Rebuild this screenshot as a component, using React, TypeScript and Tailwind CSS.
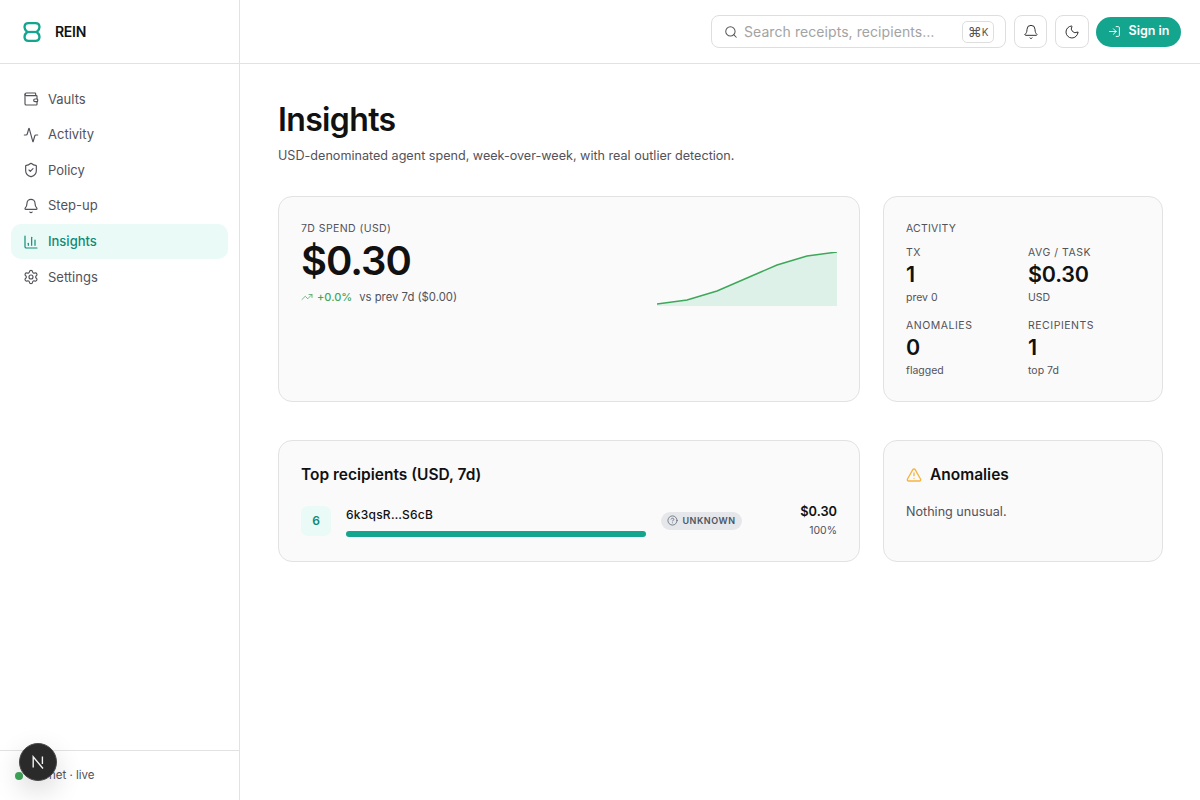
import { Activity, Bell, ChartColumn, CircleHelp, LogIn, Moon, Search, Settings, ShieldCheck, TrendingUp, TriangleAlert, Wallet } from "lucide-react";

const links = [
  { label: "Vaults", icon: Wallet },
  { label: "Activity", icon: Activity },
  { label: "Policy", icon: ShieldCheck },
  { label: "Step-up", icon: Bell },
  { label: "Insights", icon: ChartColumn, active: true },
  { label: "Settings", icon: Settings },
];

const stats = [
  { label: "TX", value: "1", note: "prev 0" },
  { label: "AVG / TASK", value: "$0.30", note: "USD" },
  { label: "ANOMALIES", value: "0", note: "flagged" },
  { label: "RECIPIENTS", value: "1", note: "top 7d" },
];

function Logo() {
  return (
    <svg width="18" height="20" viewBox="0 0 18 20" fill="none" stroke="#14a58f" strokeWidth="2.3">
      <path d="M5.4 1.2h7.2c4.6 0 5.2 5.6 1.2 8.8c4 3.2 3.4 8.8-1.2 8.8H5.4c-4.6 0-5.2-5.6-1.2-8.8c-4-3.2-3.4-8.8 1.2-8.8Z" />
      <path d="M4.2 10h9.6" />
    </svg>
  );
}

function Sidebar() {
  return (
    <aside className="relative flex h-[800px] w-[240px] shrink-0 flex-col border-r border-[#e2e2e2]">
      <div className="flex h-[64px] items-center gap-[14px] border-b border-[#e2e2e2] pl-[23px]">
        <Logo />
        <span className="text-[14px] font-semibold tracking-[-0.02em] text-[#111]">REIN</span>
      </div>
      <nav className="flex flex-1 flex-col gap-px px-[11px] pt-[18px]">
        {links.map((link) => (
          <a
            key={link.label}
            className={`flex h-[34.6px] items-center gap-[9px] rounded-[10px] pl-[12px] text-[13px] ${
              link.active ? "bg-[#eafaf6] font-medium text-[#0f8a78]" : "text-[#52525b]"
            }`}
          >
            <link.icon className="h-4 w-4" strokeWidth={1.75} />
            {link.label}
          </a>
        ))}
      </nav>
      <div className="flex h-[50px] items-center gap-[6px] border-t border-[#e2e2e2] pl-[15px] text-[11.5px] text-[#52525b]">
        <span className="h-2 w-2 rounded-full bg-[#3fa75a]" />
        devnet · live
      </div>
      {/* dev indicator */}
      <div className="absolute left-[19px] top-[743px] flex h-[38px] w-[38px] items-center justify-center rounded-full border border-[#4a4a4a] bg-[#2a2a2a] shadow-[0_10px_28px_rgba(0,0,0,0.16)]">
        <svg width="14" height="14" viewBox="0 0 14 14" fill="none" stroke="#f2f2f2" strokeWidth="1.4">
          <path d="M2.2 12.5V1.8L12 13.5" />
          <path d="M11.4 1.5v7.5" />
        </svg>
      </div>
    </aside>
  );
}

function Header() {
  return (
    <header className="flex h-[64px] items-center justify-end gap-2 border-b border-[#e2e2e2] pr-[19px]">
      <div className="flex h-[33px] w-[295px] items-center rounded-[8px] border border-[#dedede] pl-[12px] pr-[11px]">
        <Search className="h-[14px] w-[14px] text-[#555]" strokeWidth={1.75} />
        <span className="ml-[6px] flex-1 text-[14px] tracking-[0.005em] text-[#a3a3a3]">Search receipts, recipients…</span>
        <span className="flex h-[22px] w-[32px] items-center justify-center rounded-[5px] border border-[#dedede] text-[#555]">
          <span className="text-[14px] leading-none">⌘</span>
          <span className="text-[10px] leading-none">K</span>
        </span>
      </div>
      <button className="flex h-[33px] w-[33px] items-center justify-center rounded-[8px] border border-[#dedede] text-[#333]">
        <Bell className="h-4 w-4" strokeWidth={1.5} />
      </button>
      <button className="-mr-px flex h-[33px] w-[34px] items-center justify-center rounded-[8px] border border-[#dedede] text-[#333]">
        <Moon className="h-4 w-4" strokeWidth={1.5} />
      </button>
      <button className="flex h-[30px] w-[85px] items-center justify-center gap-[8px] rounded-full bg-[#14a58f] pb-px text-[12.5px] font-semibold text-white">
        <LogIn className="h-[13px] w-[13px]" strokeWidth={1.75} />
        Sign in
      </button>
    </header>
  );
}

function Sparkline() {
  return (
    <svg width="180" height="56" viewBox="0 0 180 56" className="mt-[30px]">
      <path d="M0 52 L30 48 L60 39 L90 26 L120 13 L150 4 L180 0 L180 54 L0 54 Z" fill="#def1e9" />
      <path d="M0 52 L30 48 L60 39 L90 26 L120 13 L150 4 L180 0" fill="none" stroke="#3fa75a" strokeWidth="1.5" />
    </svg>
  );
}

export default function App() {
  return (
    <div className="flex h-[800px] w-[1200px] overflow-hidden bg-white font-['Inter',sans-serif] text-[#111]">
      <Sidebar />
      <div className="flex-1">
        <Header />
        <main className="pl-[38px] pr-[37px] pt-[36px]">
          <h1 className="text-[32px] font-semibold leading-[40px] tracking-[-0.02em]">Insights</h1>
          <p className="mt-[7px] text-[12.6px] leading-[18px] text-[#52525b]">USD-denominated agent spend, week-over-week, with real outlier detection.</p>

          <div className="mt-[31px] grid grid-cols-[582px_280px] gap-x-[23px] gap-y-[38px]">
            <section className="flex h-[206px] justify-between rounded-[14px] border border-[#e2e2e2] bg-[#fafafa] px-[22px] pt-[25px]">
              <div>
                <div className="text-[10.5px] leading-[14px] tracking-[0.04em] text-[#52525b]">7D SPEND (USD)</div>
                <div className="mt-px text-[40px] font-semibold leading-[48px] tracking-[-0.025em]">$0.30</div>
                <div className="mt-[4px] flex items-center text-[11px] leading-[16px] text-[#52525b]">
                  <TrendingUp className="h-3 w-3 text-[#3fa75a]" strokeWidth={1.5} />
                  <span className="ml-[4px] font-medium text-[#3fa75a]">+0.0%</span>
                  <span className="ml-[7px] text-[11.3px]">vs prev 7d ($0.00)</span>
                </div>
              </div>
              <Sparkline />
            </section>

            <section className="h-[206px] rounded-[14px] border border-[#e2e2e2] bg-[#fafafa] px-[22px] pt-[25px]">
              <div className="text-[10.5px] leading-[14px] tracking-[0.02em] text-[#52525b]">ACTIVITY</div>
              <div className="mt-[10px] grid grid-cols-2 gap-x-[10px] gap-y-[14px]">
                {stats.map((stat) => (
                  <div key={stat.label}>
                    <div className="text-[10.5px] leading-[14px] tracking-[0.05em] text-[#52525b]">{stat.label}</div>
                    <div className="text-[21.5px] font-semibold leading-[28px] tracking-[-0.01em]">{stat.value}</div>
                    <div className="mt-[3px] text-[10.5px] leading-[14px] text-[#52525b]">{stat.note}</div>
                  </div>
                ))}
              </div>
            </section>

            <section className="h-[122px] rounded-[14px] border border-[#e2e2e2] bg-[#fafafa] px-[22px] pt-[23px]">
              <h2 className="text-[15.5px] font-semibold leading-[22px]">Top recipients (USD, 7d)</h2>
              <div className="mt-[17px] flex items-center">
                <div className="flex h-[30px] w-[30px] items-center justify-center rounded-[7px] bg-[#eafaf6] text-[12px] font-semibold text-[#0f8a78]">6</div>
                <div className="ml-[15px] mt-[2px] w-[300px]">
                  <div className="text-[12px] font-medium leading-[16px] tracking-[0.02em]">6k3qsR…S6cB</div>
                  <div className="mt-[8px] h-[6px] rounded-full bg-[#14a58f]" />
                </div>
                <span className="ml-[15px] flex h-[18px] w-[81px] items-center justify-center gap-[4px] rounded-full bg-[#e6e7eb] text-[9px] font-semibold tracking-[0.06em] text-[#4b5563]">
                  <CircleHelp className="h-[11px] w-[11px]" strokeWidth={1.5} />
                  UNKNOWN
                </span>
                <div className="ml-auto text-right">
                  <div className="text-[12.8px] font-semibold leading-[18px]">$0.30</div>
                  <div className="mt-[3px] text-[10.5px] leading-[14px] text-[#52525b]">100%</div>
                </div>
              </div>
            </section>

            <section className="h-[122px] rounded-[14px] border border-[#e2e2e2] bg-[#fafafa] px-[22px] pt-[23px]">
              <h2 className="flex items-center gap-[8px] text-[15.5px] font-semibold leading-[22px]">
                <TriangleAlert className="h-4 w-4 text-[#f7b33e]" strokeWidth={2} />
                Anomalies
              </h2>
              <p className="mt-[17px] text-[12.6px] leading-[18px] text-[#52525b]">Nothing unusual.</p>
            </section>
          </div>
        </main>
      </div>
    </div>
  );
}
